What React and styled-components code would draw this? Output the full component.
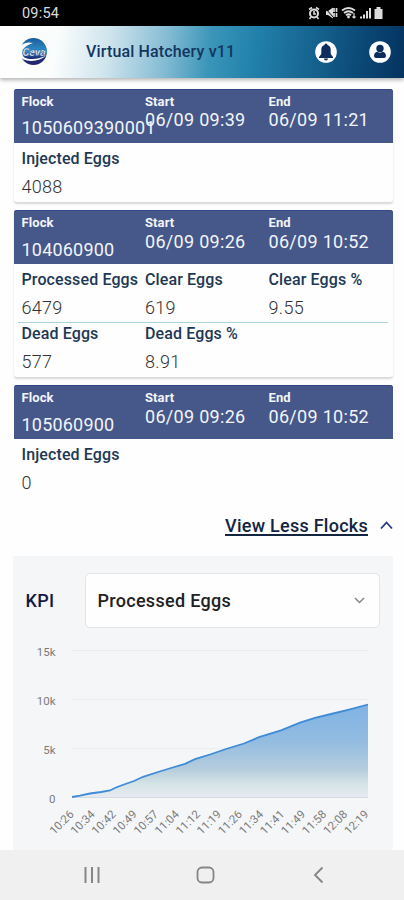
import React from 'react';
import styled, { createGlobalStyle } from 'styled-components';

const GlobalStyle = createGlobalStyle`
  * { box-sizing: border-box; }
  body {
    margin: 0;
    background: #fefefe;
    font-family: Roboto, "Liberation Sans", sans-serif;
  }
`;

const Screen = styled.div`
  width: 404px;
  height: 900px;
  display: flex;
  flex-direction: column;
  overflow: hidden;
  background: #fefefe;
`;

const StatusBar = styled.div`
  flex: none;
  height: 26px;
  padding: 0 20px 0 22px;
  display: flex;
  align-items: center;
  justify-content: space-between;
  background: #000;
  color: #dcdcdc;
  font-size: 14.5px;
  letter-spacing: 0.2px;
`;

const Header = styled.header`
  flex: none;
  height: 52px;
  padding: 0 13px 0 19px;
  display: flex;
  align-items: center;
  background: linear-gradient(97deg, #fefefe 0%, #fbfdfd 14%, #cfe4ed 27%, #85bcd4 41%, #3a95b9 52%, #2180aa 63%, #16638f 77%, #0a4674 90%, #05335f 100%);
  box-shadow: 0 2px 4px rgba(0, 0, 0, 0.3);
  z-index: 1;
`;

const Title = styled.h1`
  flex: 1;
  margin: 0 0 0 38px;
  color: #12365f;
  font-size: 16px;
  font-weight: 500;
  line-height: 20px;
  letter-spacing: 0.15px;
`;

const HeaderIcons = styled.div`
  display: flex;
  gap: 32px;
`;

const Content = styled.main`
  flex: 1;
  min-height: 0;
  padding: 10.5px 11.5px 0 13.5px;
  display: flex;
  flex-direction: column;
`;

const Card = styled.section`
  flex: none;
  height: ${(props) => props.$height}px;
  margin-bottom: 8px;
  border-radius: 4px 4px 3px 3px;
  background: #fefefe;
  box-shadow: ${(props) => (props.$flat ? 'none' : '0 2px 2px rgba(0, 0, 0, 0.15)')};
`;

const CardHead = styled.div`
  height: 54px;
  padding: 5px 0 0 8px;
  display: grid;
  grid-template-columns: 123.5px 123.5px 1fr;
  border-radius: 3px 3px 0 0;
  background: #465889;
  box-shadow: inset 0 1px 0 #34498a;
  color: #f2f4fa;
`;

const HeadLabel = styled.div`
  font-size: 13px;
  font-weight: 700;
  line-height: 15px;
  letter-spacing: 0.1px;
`;

const HeadValue = styled.div`
  margin-top: ${(props) => (props.$low ? 9.5 : 1.5)}px;
  font-size: 18px;
  line-height: 20px;
  letter-spacing: ${(props) => (props.$low ? 0.2 : 0.3)}px;
  white-space: nowrap;
`;

const Row = styled.div`
  margin: 0 5px 0 4px;
  padding: ${(props) => (props.$second ? 0 : 5)}px 0 0 4px;
  height: ${(props) => (props.$second ? 53 : 59)}px;
  display: grid;
  grid-template-columns: 123.5px 123.5px 1fr;
  border-bottom: ${(props) => (props.$line ? '1px solid #acd3d6' : 'none')};
`;

const RowLabel = styled.div`
  color: #1d3853;
  font-size: 16px;
  font-weight: 500;
  line-height: 21px;
  letter-spacing: 0.12px;
  white-space: nowrap;
`;

const RowValue = styled.div`
  margin-top: 8px;
  color: #333;
  font-size: 18px;
  font-weight: 300;
  line-height: 20px;
  letter-spacing: 0.3px;
`;

const ViewLess = styled.div`
  flex: none;
  height: 22px;
  margin-top: 9.5px;
  display: flex;
  align-items: center;
  justify-content: flex-end;
  gap: 11.5px;
`;

const ViewLink = styled.a`
  color: #12243f;
  font-size: 18px;
  font-weight: 500;
  line-height: 22px;
  letter-spacing: 0.26px;
  text-decoration: underline;
  text-decoration-thickness: 1.5px;
  text-underline-offset: 2px;
  text-decoration-skip-ink: none;
`;

const Panel = styled.section`
  flex: 1;
  margin-top: 19.5px;
  margin-left: -0.5px;
  padding-top: 17px;
  border-radius: 2px;
  background: #f5f6f8;
`;

const KpiBar = styled.div`
  height: 54px;
  padding: 0 13px 0 12.5px;
  display: flex;
  align-items: center;
  justify-content: space-between;
`;

const KpiLabel = styled.span`
  color: #111b44;
  font-size: 18px;
  font-weight: 500;
  letter-spacing: 0.3px;
`;

const Select = styled.div`
  width: 295px;
  height: 55px;
  padding: 0 14px 0 12px;
  display: flex;
  align-items: center;
  justify-content: space-between;
  border: 1px solid #e1e4e8;
  border-radius: 5px;
  background: #fefefe;
  color: #222;
  font-size: 18px;
  font-weight: 500;
  letter-spacing: 0.3px;
`;

const ChartSvg = styled.svg`
  display: block;
  text {
    fill: #7b7b7b;
    font-size: 11.5px;
  }
`;

const NavBar = styled.nav`
  flex: none;
  height: 50px;
  padding: 0 80px 0 84px;
  display: flex;
  align-items: center;
  justify-content: space-between;
  background: #f0f0f0;
`;

const HomeIcon = styled.svg`
  margin-right: 3px;
`;

const flocks = [
  {
    id: '1050609390001',
    start: '06/09 09:39',
    end: '06/09 11:21',
    height: 113.5,
    rows: [[['Injected Eggs', '4088']]],
  },
  {
    id: '104060900',
    start: '06/09 09:26',
    end: '06/09 10:52',
    height: 167,
    rows: [
      [['Processed Eggs', '6479'], ['Clear Eggs', '619'], ['Clear Eggs %', '9.55']],
      [['Dead Eggs', '577'], ['Dead Eggs %', '8.91']],
    ],
  },
  {
    id: '105060900',
    start: '06/09 09:26',
    end: '06/09 10:52',
    height: 112,
    flat: true,
    rows: [[['Injected Eggs', '0']]],
  },
];

const times = ['10:26', '10:34', '10:42', '10:49', '10:57', '11:04', '11:12', '11:19',
  '11:26', '11:34', '11:41', '11:49', '11:58', '12:08', '12:19'];

// [x, y] in chart pixels, the zero line is at y = 171
const line = [[59, 170], [67, 168.7], [77, 166.5], [88, 165], [97, 163.5], [103, 160.5],
  [111, 157.5], [121, 154], [130, 149.8], [145, 145], [158, 141], [172, 136.8], [182, 132.2],
  [197, 127.5], [213, 122], [231, 116.5], [246, 110.2], [268, 103.3], [287, 95.6],
  [302, 90.8], [318, 87], [335, 82.8], [355, 77.5]];

function StatusIcons() {
  return (
    <svg width="76" height="14" viewBox="0 0 76 14" fill="none" stroke="#dcdcdc">
      <circle cx="6" cy="7.5" r="4" strokeWidth="2" />
      <path d="M6 5v3h2M1 3.5l3-2M11 3.5l-3-2M3 11l-1.5 2M9 11l1.5 2" strokeWidth="1.6" />
      <path d="M18 5h2l5-3.500v11l-5-3.500h-2z" fill="#dcdcdc" stroke="none" />
      <path d="M17 2l9 10" stroke="#000" strokeWidth="1" />
      <path d="M26 2v10M28.500 2v10" strokeWidth="1.7" strokeDasharray="4 1" />
      <path d="M34 4.5q6.500-5 13 0M36 7q4.500-3.500 9 0M38 9.200q2.500-2 5 0" strokeWidth="1.9" />
      <circle cx="40.500" cy="11" r="1.400" fill="#dcdcdc" stroke="none" />
      <path d="M46 7v5M44.500 10.500l1.500 1.500 1.500-1.500" strokeWidth="1.200" />
      <path d="M53 12.500v-2M56 12.500V8.500M59 12.500V5M62 12.500V2" strokeWidth="2" />
      <path d="M66.500 3h2V1h4v2h2v10h-8z" fill="#dcdcdc" stroke="none" />
    </svg>
  );
}

function Logo() {
  return (
    <svg width="29" height="30" viewBox="0 0 29 30">
      <defs>
        <linearGradient id="globe" x1="0" y1="0" x2="0" y2="1">
          <stop offset="0" stopColor="#1c5c9c" />
          <stop offset="0.5" stopColor="#2c91c7" />
          <stop offset="0.75" stopColor="#1d2a75" />
          <stop offset="1" stopColor="#25276c" />
        </linearGradient>
      </defs>
      <circle cx="14.500" cy="14.500" r="13.500" fill="url(#globe)" />
      <path d="M1 9Q7 4 14 6Q7 8 3.500 13Q2 20 8 21.500Q18 23.500 28 18Q19 25.500 8 23.500Q0 22 0 16z" fill="#fff" />
      <text x="3.500" y="19" fontSize="10" fontWeight="700" fontStyle="italic" fill="#fff" stroke="#20428a" strokeWidth="0.300" textLength="23" lengthAdjust="spacingAndGlyphs">Ceva</text>
    </svg>
  );
}

function BellIcon() {
  return (
    <svg width="22" height="24" viewBox="0 0 22 24">
      <circle cx="11" cy="12" r="10.800" fill="#fff" />
      <path d="M11 3.500a1.500 1.500 0 0 1 1.500 1.600c2.300.7 3.200 2.600 3.200 5v4l2.300 3v1H4v-1l2.300-3v-4c0-2.400.9-4.300 3.200-5A1.500 1.500 0 0 1 11 3.500zM9 18.500h4a2 2 0 0 1-4 0z" fill="#0d2d5c" />
    </svg>
  );
}

function UserIcon() {
  return (
    <svg width="22" height="24" viewBox="0 0 22 24">
      <circle cx="11" cy="12" r="10.800" fill="#fff" />
      <circle cx="11" cy="8.500" r="3.700" fill="#0d2d5c" />
      <path d="M5 16c0-3 2-4.200 3.500-4.200q2.500 1.700 5 0C15 11.800 17 13 17 16q0 2-2 2H7q-2 0-2-2z" fill="#0d2d5c" />
    </svg>
  );
}

function FlockCard({ flock }) {
  return (
    <Card $height={flock.height} $flat={flock.flat}>
      <CardHead>
        <div>
          <HeadLabel>Flock</HeadLabel>
          <HeadValue $low>{flock.id}</HeadValue>
        </div>
        <div>
          <HeadLabel>Start</HeadLabel>
          <HeadValue>{flock.start}</HeadValue>
        </div>
        <div>
          <HeadLabel>End</HeadLabel>
          <HeadValue>{flock.end}</HeadValue>
        </div>
      </CardHead>
      {flock.rows.map((row, i) => (
        <Row key={i} $second={i > 0} $line={i < flock.rows.length - 1}>
          {row.map(([label, value]) => (
            <div key={label}>
              <RowLabel>{label}</RowLabel>
              <RowValue>{value}</RowValue>
            </div>
          ))}
        </Row>
      ))}
    </Card>
  );
}

function Chart() {
  const points = line.map((p) => p.join(',')).join(' ');

  return (
    <ChartSvg width="379" height="222" viewBox="0 0 379 222">
      <defs>
        <linearGradient id="area" x1="0" y1="0" x2="0" y2="1">
          <stop offset="0" stopColor="#7fb3e4" />
          <stop offset="0.4" stopColor="#93bce0" />
          <stop offset="0.7" stopColor="#b5cddd" />
          <stop offset="0.87" stopColor="#d7e5e6" />
          <stop offset="1" stopColor="#e7eaf1" />
        </linearGradient>
      </defs>
      {['15k', '10k', '5k', '0'].map((label, i) => (
        <g key={label}>
          <path d={`M59 ${23.5 + i * 49}H355`} stroke={i === 3 ? '#d0dbe6' : '#eaecef'} />
          <text x="42.500" y={28.5 + i * 49} textAnchor="end">{label}</text>
        </g>
      ))}
      <polygon points={`59,170 ${points} 355,170`} fill="url(#area)" />
      <polyline points={points} fill="none" stroke="#3f8bd6" strokeWidth="1.800" />
      {times.map((time, i) => (
        <text key={time} textAnchor="end" transform={`translate(${61.5 + i * 21.05} 188) rotate(-45)`}>{time}</text>
      ))}
    </ChartSvg>
  );
}

export default function App() {
  return (
    <Screen>
      <GlobalStyle />
      <StatusBar>
        <span>09:54</span>
        <StatusIcons />
      </StatusBar>
      <Header>
        <Logo />
        <Title>Virtual Hatchery v11</Title>
        <HeaderIcons>
          <BellIcon />
          <UserIcon />
        </HeaderIcons>
      </Header>
      <Content>
        {flocks.map((flock) => <FlockCard key={flock.id} flock={flock} />)}
        <ViewLess>
          <ViewLink>View Less Flocks</ViewLink>
          <svg width="13" height="9" viewBox="0 0 13 9" fill="none" stroke="#233a83" strokeWidth="1.800">
            <path d="M1 7.500l5.500-6L12 7.500" />
          </svg>
        </ViewLess>
        <Panel>
          <KpiBar>
            <KpiLabel>KPI</KpiLabel>
            <Select>
              Processed Eggs
              <svg width="11" height="8" viewBox="0 0 11 8" fill="none" stroke="#858585" strokeWidth="1.500">
                <path d="M1 2l4.500 4.500L10 2" />
              </svg>
            </Select>
          </KpiBar>
          <Chart />
        </Panel>
      </Content>
      <NavBar>
        <svg width="16" height="18" stroke="#858585" strokeWidth="2">
          <path d="M1.500 1v16M8 1v16M14.500 1v16" />
        </svg>
        <HomeIcon width="19" height="18" fill="none" stroke="#858585" strokeWidth="1.800">
          <rect x="1.500" y="1.500" width="16" height="15" rx="4.500" />
        </HomeIcon>
        <svg width="11" height="18" fill="none" stroke="#858585" strokeWidth="1.800">
          <path d="M9.500 1.500L2 9l7.500 7.500" />
        </svg>
      </NavBar>
    </Screen>
  );
}
